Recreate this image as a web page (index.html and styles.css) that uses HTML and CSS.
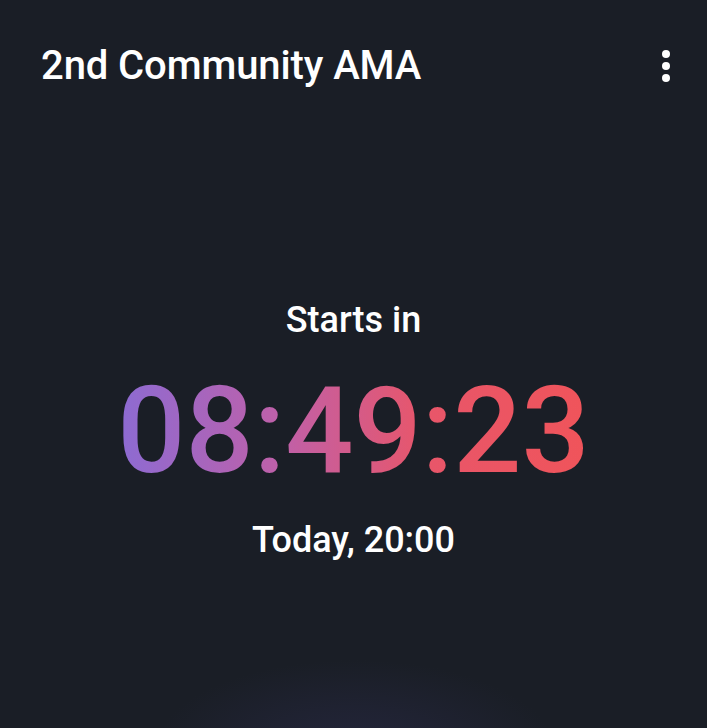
FILE: index.html
```html
<!DOCTYPE html>
<html>
<head>
<meta charset="utf-8">
<link rel="stylesheet" href="styles.css">
</head>
<body>
<div class="card">
  <header class="header">
    <h1 class="title">2nd Community AMA</h1>
    <button class="menu" aria-label="More">
      <svg width="8" height="32" viewBox="0 0 8 32"><circle cx="4" cy="4" r="4" fill="#fff"/><circle cx="4" cy="16" r="4" fill="#fff"/><circle cx="4" cy="28" r="4" fill="#fff"/></svg>
    </button>
  </header>
  <main class="content">
    <div class="label">Starts in</div>
    <div class="timer">08:49:23</div>
    <div class="when">Today, 20:00</div>
  </main>
</div>
</body>
</html>
```
FILE: styles.css
```css
html, body {
  margin: 0;
  padding: 0;
  background: #1a1e26;
}
.card {
  width: 707px;
  height: 728px;
  box-sizing: border-box;
  background: radial-gradient(ellipse 200px 90px at 355px 750px, #23253a 0%, rgba(35,37,58,0.6) 45%, rgba(26,30,38,0) 100%), #1a1e26;
  font-family: Roboto, "Noto Sans", sans-serif;
  color: #fff;
  display: flex;
  flex-direction: column;
}
.header {
  display: flex;
  align-items: center;
  justify-content: space-between;
  padding: 42px 37px 0 41px;
}
.title {
  margin: 0;
  font-size: 40px;
  font-weight: 500;
  line-height: 48px;
  letter-spacing: -0.1px;
}
.menu {
  background: none;
  border: 0;
  padding: 0;
  display: flex;
}
.content {
  display: flex;
  flex-direction: column;
  align-items: center;
  padding-top: 208px;
}
.label {
  font-size: 36px;
  font-weight: 500;
  line-height: 44px;
}
.timer {
  font-size: 120px;
  font-weight: 500;
  line-height: 140px;
  margin-top: 19px;
  background: linear-gradient(90deg, #8c6bd3 0%, #c060a8 35%, #e8566a 65%, #f0545a 100%);
  -webkit-background-clip: text;
  background-clip: text;
  color: transparent;
}
.when {
  font-size: 36px;
  font-weight: 500;
  line-height: 44px;
  margin-top: 17px;
}
```
